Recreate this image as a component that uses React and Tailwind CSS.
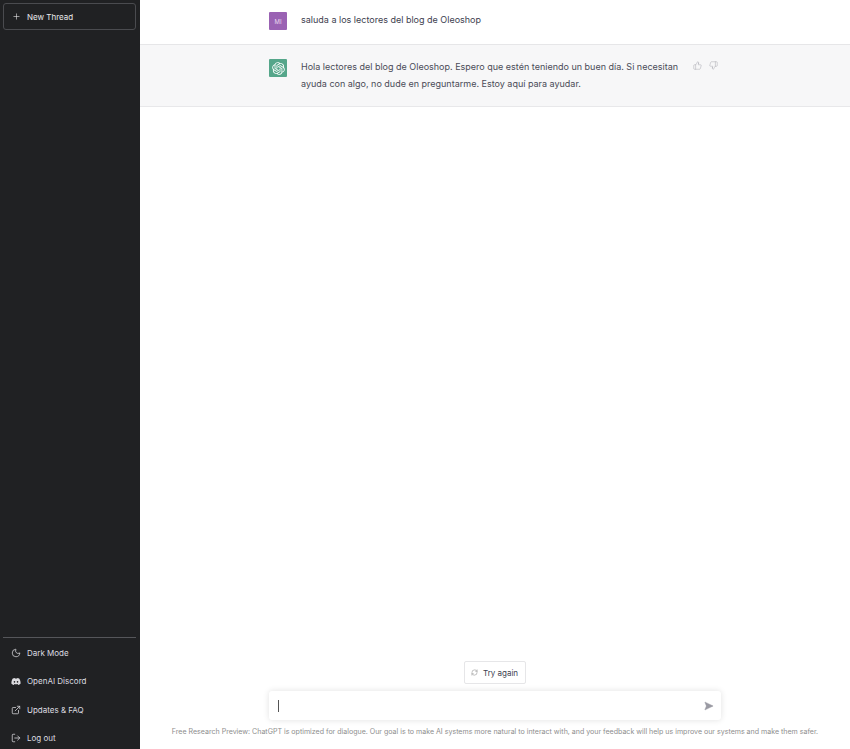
import { Plus, Moon, ExternalLink, LogOut, RefreshCw, ThumbsUp, ThumbsDown, Send } from "lucide-react";
import { FaDiscord } from "react-icons/fa6";

function OpenAILogo() {
  return (
    <svg viewBox="0 0 41 41" fill="none" className="w-[13px] h-[13px]">
      <path
        fill="currentColor"
        d="M37.5324 16.8707C37.9808 15.5241 38.1363 14.0974 37.9886 12.6859C37.8409 11.2744 37.3934 9.91076 36.676 8.68622C35.6126 6.83404 33.9882 5.3676 32.0373 4.4985C30.0864 3.62941 27.9098 3.40259 25.8215 3.85078C24.8796 2.7893 23.7219 1.94125 22.4257 1.36341C21.1295 0.785575 19.7249 0.491269 18.3058 0.500197C16.1708 0.495044 14.0893 1.16803 12.3614 2.42214C10.6335 3.67624 9.34853 5.44666 8.6917 7.47815C7.30085 7.76286 5.98686 8.3414 4.8377 9.17505C3.68854 10.0087 2.73073 11.0782 2.02839 12.312C0.956464 14.1591 0.498905 16.2988 0.721698 18.4228C0.944492 20.5467 1.83612 22.5449 3.268 24.1293C2.81966 25.4759 2.66413 26.9026 2.81182 28.3141C2.95951 29.7256 3.40701 31.0892 4.12437 32.3138C5.18791 34.1659 6.8123 35.6322 8.76321 36.5013C10.7141 37.3704 12.8907 37.5973 14.9789 37.1492C15.9208 38.2107 17.0786 39.0587 18.3747 39.6366C19.6709 40.2144 21.0755 40.5087 22.4946 40.4998C24.6307 40.5054 26.7133 39.8321 28.4418 38.5772C30.1704 37.3223 31.4556 35.5506 32.1119 33.5179C33.5027 33.2332 34.8167 32.6547 35.9659 31.821C37.115 30.9874 38.0728 29.9178 38.7752 28.684C39.8458 26.8371 40.3023 24.6979 40.0789 22.5748C39.8556 20.4517 38.9639 18.4544 37.5324 16.8707ZM22.4978 37.8849C20.7443 37.8874 19.0459 37.2733 17.6994 36.1501C17.7601 36.117 17.8666 36.0586 17.936 36.0161L25.9004 31.4156C26.1003 31.3019 26.2663 31.137 26.3813 30.9378C26.4964 30.7386 26.5563 30.5124 26.5549 30.2825V19.0542L29.9213 20.998C29.9389 21.0068 29.9541 21.0198 29.9656 21.0359C29.977 21.052 29.9842 21.0707 29.9867 21.0902V30.3889C29.9842 32.375 29.1946 34.2791 27.7909 35.6841C26.3872 37.0892 24.4838 37.8806 22.4978 37.8849ZM6.39227 31.0064C5.51397 29.4888 5.19742 27.7107 5.49804 25.9832C5.55718 26.0187 5.66048 26.0818 5.73461 26.1244L13.699 30.7248C13.8975 30.8408 14.1233 30.902 14.3532 30.902C14.583 30.902 14.8088 30.8408 15.0073 30.7248L24.731 25.1103V28.9979C24.7321 29.0177 24.7283 29.0376 24.7199 29.0556C24.7115 29.0736 24.6988 29.0893 24.6829 29.1012L16.6317 33.7497C14.9096 34.7416 12.8643 35.0097 10.9447 34.4954C9.02506 33.9811 7.38785 32.7263 6.39227 31.0064ZM4.29707 13.6194C5.17156 12.0998 6.55279 10.9364 8.19885 10.3327C8.19885 10.4013 8.19491 10.5228 8.19491 10.6071V19.808C8.19351 20.0378 8.25334 20.2638 8.36823 20.4629C8.48312 20.6619 8.64893 20.8267 8.84863 20.9404L18.5723 26.5542L15.206 28.4979C15.1894 28.5089 15.1703 28.5155 15.1505 28.5173C15.1307 28.5191 15.1107 28.516 15.0924 28.5082L7.04046 23.8557C5.32135 22.8601 4.06716 21.2235 3.55289 19.3046C3.03862 17.3858 3.30624 15.3413 4.29707 13.6194ZM31.955 20.0556L22.2312 14.4411L25.5976 12.4981C25.6142 12.4872 25.6333 12.4805 25.6531 12.4787C25.6729 12.4769 25.6928 12.4801 25.7111 12.4879L33.7631 17.1364C34.9967 17.849 36.0017 18.8982 36.6606 20.1613C37.3194 21.4244 37.6047 22.849 37.4832 24.2684C37.3617 25.6878 36.8382 27.0432 35.9743 28.1759C35.1103 29.3086 33.9415 30.1717 32.6047 30.6641C32.6047 30.5947 32.6047 30.4733 32.6047 30.3889V21.188C32.6066 20.9586 32.5474 20.7328 32.4332 20.5338C32.319 20.3348 32.154 20.1698 31.955 20.0556ZM35.3055 15.0128C35.2464 14.9765 35.1431 14.9142 35.069 14.8717L27.1045 10.2712C26.906 10.1554 26.6803 10.0943 26.4504 10.0943C26.2206 10.0943 25.9948 10.1554 25.7963 10.2712L16.0726 15.8858V11.9982C16.0715 11.9783 16.0753 11.9585 16.0837 11.9405C16.0921 11.9225 16.1048 11.9068 16.1207 11.8949L24.1719 7.25025C25.4053 6.53903 26.8158 6.19376 28.2383 6.25482C29.6608 6.31589 31.0364 6.78077 32.2044 7.59508C33.3723 8.40939 34.2842 9.53945 34.8334 10.8531C35.3826 12.1667 35.5464 13.6095 35.3055 15.0128ZM14.2424 21.9419L10.8752 19.9981C10.8576 19.9893 10.8423 19.9763 10.8309 19.9602C10.8195 19.9441 10.8122 19.9254 10.8098 19.9058V10.6071C10.8107 9.18295 11.2173 7.78848 11.9819 6.58696C12.7466 5.38544 13.8377 4.42659 15.1275 3.82264C16.4173 3.21869 17.8524 2.99464 19.2649 3.1767C20.6775 3.35876 22.0089 3.93941 23.1034 4.85067C23.0427 4.88379 22.937 4.94215 22.8668 4.98473L14.9024 9.58517C14.7025 9.69878 14.5366 9.86356 14.4215 10.0626C14.3065 10.2616 14.2466 10.4877 14.2479 10.7175L14.2424 21.9419ZM16.071 17.9991L20.4018 15.4978L24.7325 17.9975V22.9985L20.4018 25.4983L16.071 22.9985V17.9991Z"
      />
    </svg>
  );
}

function SideItem({ icon, label }) {
  return (
    <div className="h-[28.33px] flex items-center pl-[8px] gap-[6px] text-[8px] text-[#dcdce0]">
      <span className="w-[10px] flex justify-center">{icon}</span>
      <span>{label}</span>
    </div>
  );
}

export default function App() {
  return (
    <div className="flex h-[749px] w-[850px] overflow-hidden bg-white font-['Inter',sans-serif]">
      {/* Sidebar */}
      <div className="w-[140px] shrink-0 bg-[#202123] flex flex-col px-[3px] pt-[3px]">
        <div className="h-[27px] w-[133px] shrink-0 rounded-[3px] border border-[#4a4b4f] flex items-center pl-[8px] gap-[6px] text-[8px] text-[#e8e8ea]">
          <Plus size={9} strokeWidth={1.6} />
          <span>New Thread</span>
        </div>
        <div className="h-[607px] shrink-0" />
        <div className="border-t border-[#55565a] w-[133px] pt-[1px] shrink-0">
          <SideItem icon={<Moon size={10} strokeWidth={1.8} />} label="Dark Mode" />
          <SideItem icon={<FaDiscord size={11} />} label="OpenAI Discord" />
          <SideItem icon={<ExternalLink size={10} strokeWidth={1.8} />} label="Updates & FAQ" />
          <SideItem icon={<LogOut size={10} strokeWidth={1.8} />} label="Log out" />
        </div>
      </div>

      {/* Chat */}
      <div className="flex-1 flex flex-col">
        <div className="h-[45px] border-b border-[#e6e6e8] flex pl-[129px] pt-[12px] gap-[14px]">
          <div className="w-[18px] h-[18px] rounded-[1px] bg-[#9a62b3] flex items-center justify-center text-[6px] text-[#e6d8ee]">
            MI
          </div>
          <p className="text-[9px] leading-[16px] text-[#40414f]">saluda a los lectores del blog de Oleoshop</p>
        </div>

        <div className="h-[62px] bg-[#f7f7f8] border-b border-[#e8e8ea] flex pl-[129px] pt-[14px] gap-[14px]">
          <div className="w-[18px] h-[18px] rounded-[1px] bg-[#55a68a] flex items-center justify-center text-white shrink-0">
            <OpenAILogo />
          </div>
          <p className="w-[378px] text-[9px] leading-[16.5px] text-[#4a4b57]">
            Hola lectores del blog de Oleoshop. Espero que estén teniendo un buen día. Si necesitan ayuda con algo, no dude en preguntarme. Estoy aquí para ayudar.
          </p>
          <div className="flex gap-[7px] pt-[2px] text-[#a8a8b0]">
            <ThumbsUp size={9} strokeWidth={1.3} />
            <ThumbsDown size={9} strokeWidth={1.3} />
          </div>
        </div>

        <div className="flex-1" />

        <div className="flex justify-center">
          <div className="h-[23px] w-[62px] ml-[-1px] border border-[#e6e6e8] rounded-[2px] flex items-center justify-center gap-[5px] text-[8px] text-[#40414f]">
            <RefreshCw size={7} strokeWidth={1.5} className="text-[#777]" />
            <span>Try again</span>
          </div>
        </div>

        <div className="mt-[7px] ml-[129px] w-[452px] h-[29px] rounded-[3px] bg-white shadow-[0_0_6px_rgba(0,0,0,0.12)] flex items-center justify-between pl-[9px] pr-[9px]">
          <div className="w-px h-[12px] bg-[#555]" />
          <Send size={10} className="text-[#9a9aa3] fill-[#9a9aa3] rotate-45" strokeWidth={1} />
        </div>

        <p className="mt-[7px] h-[22px] text-center text-[7.05px] text-[#8e8e8e]">
          Free Research Preview: ChatGPT is optimized for dialogue. Our goal is to make AI systems more natural to interact with, and your feedback will help us improve our systems and make them safer.
        </p>
      </div>
    </div>
  );
}
